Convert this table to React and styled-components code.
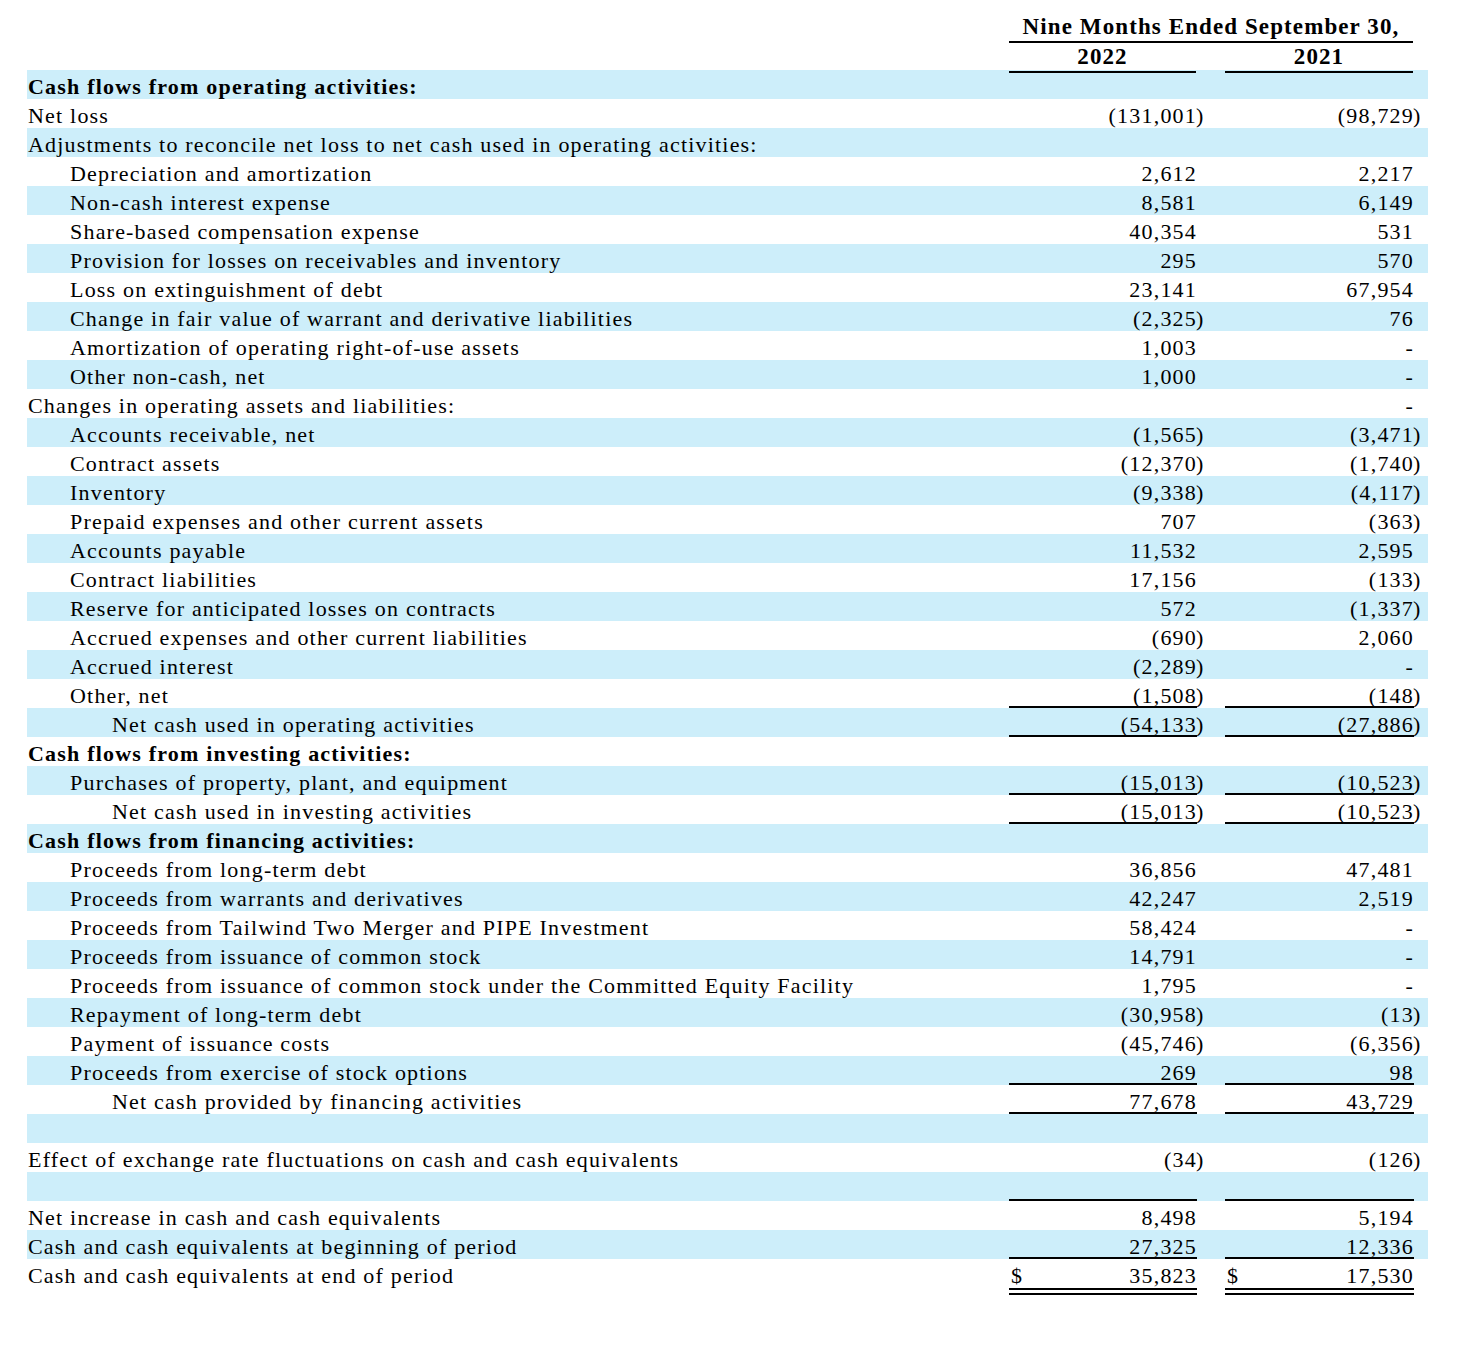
import React from 'react';
import styled, { createGlobalStyle } from 'styled-components';

const GlobalStyle = createGlobalStyle`
  html, body {
    margin: 0;
    padding: 0;
    background: #ffffff;
  }
  body {
    font-family: "Liberation Serif", "Times New Roman", serif;
    color: #000000;
  }
`;

const Page = styled.main`
  padding: 12px 0 40px 27px;
  width: 1401px;
`;

const Row = styled.div`
  display: grid;
  grid-template-columns: 982px 187px 29px 188px 15px;
  height: 29px;
  background: ${(p) => (p.$shade ? '#cdeefa' : 'transparent')};
  font-size: 22px;
  letter-spacing: 1.2px;
  line-height: 29px;
`;

const HeadRow = styled(Row)`
  font-weight: bold;
  font-size: 23px;
  letter-spacing: 1.1px;
  background: transparent;
`;

const Label = styled.div`
  padding-top: 2px;
  padding-left: ${(p) => p.$indent * 42 + 1}px;
  font-weight: ${(p) => (p.$bold ? 'bold' : 'normal')};
  white-space: nowrap;
`;

const Title = styled.div`
  grid-column: 2 / span 3;
  text-align: center;
  box-sizing: border-box;
  border-bottom: 2px solid #000;
`;

const Year = styled.div`
  grid-column: ${(p) => p.$col};
  text-align: center;
  box-sizing: border-box;
  border-bottom: 2px solid #000;
  padding-top: 1px;
`;

const Amount = styled.div`
  display: flex;
  justify-content: space-between;
  box-sizing: border-box;
  white-space: nowrap;
  padding: 2px 0 0 2px;
  margin-right: -1px;
  border-bottom: ${(p) =>
    p.$rule === 'double' ? '7px double #000' : p.$rule ? '2px solid #000' : 'none'};
  height: ${(p) => (p.$rule === 'double' ? '36px' : '29px')};
`;

const Paren = styled.div`
  padding-top: 2px;
  white-space: nowrap;
`;

const rows = [
  { label: 'Cash flows from operating activities:', bold: true },
  { label: 'Net loss', a: '(131,001)', b: '(98,729)' },
  { label: 'Adjustments to reconcile net loss to net cash used in operating activities:' },
  { label: 'Depreciation and amortization', indent: 1, a: '2,612', b: '2,217' },
  { label: 'Non-cash interest expense', indent: 1, a: '8,581', b: '6,149' },
  { label: 'Share-based compensation expense', indent: 1, a: '40,354', b: '531' },
  { label: 'Provision for losses on receivables and inventory', indent: 1, a: '295', b: '570' },
  { label: 'Loss on extinguishment of debt', indent: 1, a: '23,141', b: '67,954' },
  { label: 'Change in fair value of warrant and derivative liabilities', indent: 1, a: '(2,325)', b: '76' },
  { label: 'Amortization of operating right-of-use assets', indent: 1, a: '1,003', b: '-' },
  { label: 'Other non-cash, net', indent: 1, a: '1,000', b: '-' },
  { label: 'Changes in operating assets and liabilities:', b: '-' },
  { label: 'Accounts receivable, net', indent: 1, a: '(1,565)', b: '(3,471)' },
  { label: 'Contract assets', indent: 1, a: '(12,370)', b: '(1,740)' },
  { label: 'Inventory', indent: 1, a: '(9,338)', b: '(4,117)' },
  { label: 'Prepaid expenses and other current assets', indent: 1, a: '707', b: '(363)' },
  { label: 'Accounts payable', indent: 1, a: '11,532', b: '2,595' },
  { label: 'Contract liabilities', indent: 1, a: '17,156', b: '(133)' },
  { label: 'Reserve for anticipated losses on contracts', indent: 1, a: '572', b: '(1,337)' },
  { label: 'Accrued expenses and other current liabilities', indent: 1, a: '(690)', b: '2,060' },
  { label: 'Accrued interest', indent: 1, a: '(2,289)', b: '-' },
  { label: 'Other, net', indent: 1, a: '(1,508)', b: '(148)', rule: true },
  { label: 'Net cash used in operating activities', indent: 2, a: '(54,133)', b: '(27,886)', rule: true },
  { label: 'Cash flows from investing activities:', bold: true },
  { label: 'Purchases of property, plant, and equipment', indent: 1, a: '(15,013)', b: '(10,523)', rule: true },
  { label: 'Net cash used in investing activities', indent: 2, a: '(15,013)', b: '(10,523)', rule: true },
  { label: 'Cash flows from financing activities:', bold: true },
  { label: 'Proceeds from long-term debt', indent: 1, a: '36,856', b: '47,481' },
  { label: 'Proceeds from warrants and derivatives', indent: 1, a: '42,247', b: '2,519' },
  { label: 'Proceeds from Tailwind Two Merger and PIPE Investment', indent: 1, a: '58,424', b: '-' },
  { label: 'Proceeds from issuance of common stock', indent: 1, a: '14,791', b: '-' },
  { label: 'Proceeds from issuance of common stock under the Committed Equity Facility', indent: 1, a: '1,795', b: '-' },
  { label: 'Repayment of long-term debt', indent: 1, a: '(30,958)', b: '(13)' },
  { label: 'Payment of issuance costs', indent: 1, a: '(45,746)', b: '(6,356)' },
  { label: 'Proceeds from exercise of stock options', indent: 1, a: '269', b: '98', rule: true },
  { label: 'Net cash provided by financing activities', indent: 2, a: '77,678', b: '43,729', rule: true },
  { label: '' },
  { label: 'Effect of exchange rate fluctuations on cash and cash equivalents', a: '(34)', b: '(126)' },
  { label: '', rule: true },
  { label: 'Net increase in cash and cash equivalents', a: '8,498', b: '5,194' },
  { label: 'Cash and cash equivalents at beginning of period', a: '27,325', b: '12,336', rule: true },
  { label: 'Cash and cash equivalents at end of period', a: '35,823', b: '17,530', rule: 'double', dollar: true },
];

const split = (v) => {
  if (!v) return ['', ''];
  if (v.endsWith(')')) return [v.slice(0, -1), ')'];
  return [v, ''];
};

const Cell = ({ value, rule, dollar }) => {
  const [num, paren] = split(value);
  return (
    <>
      <Amount $rule={rule}>
        <span>{dollar ? '$' : ''}</span>
        <span>{num}</span>
      </Amount>
      <Paren>{paren}</Paren>
    </>
  );
};

const App = () => (
  <Page>
    <GlobalStyle />
    <HeadRow>
      <div />
      <Title>Nine Months Ended September 30,</Title>
    </HeadRow>
    <HeadRow>
      <div />
      <Year $col={2}>2022</Year>
      <div />
      <Year $col={4}>2021</Year>
    </HeadRow>
    {rows.map((r, i) => (
      <Row key={i} $shade={i % 2 === 0}>
        <Label $indent={r.indent || 0} $bold={r.bold}>{r.label}</Label>
        <Cell value={r.a} rule={r.rule} dollar={r.dollar} />
        <Cell value={r.b} rule={r.rule} dollar={r.dollar} />
      </Row>
    ))}
  </Page>
);

export default App;
